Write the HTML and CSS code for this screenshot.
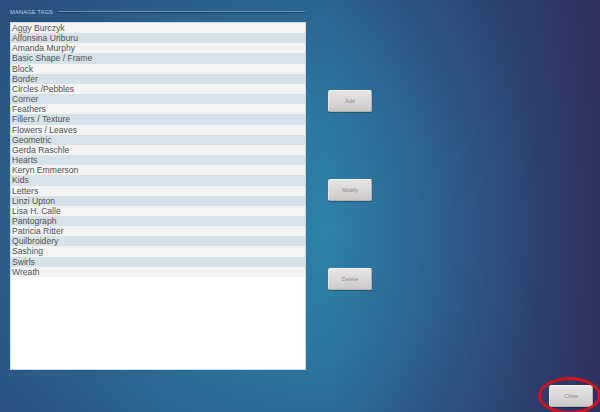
FILE: index.html
```html
<!DOCTYPE html>
<html>
<head>
<meta charset="utf-8">
<link rel="stylesheet" href="styles.css">
</head>
<body>
<div class="page">
  <div class="header">
    <span class="title">MANAGE TAGS</span>
    <span class="rule"></span>
  </div>
  <div class="main">
    <div class="list">
      <div class="row">Aggy Burczyk</div>
      <div class="row">Alfonsina Uriburu</div>
      <div class="row">Amanda Murphy</div>
      <div class="row">Basic Shape / Frame</div>
      <div class="row">Block</div>
      <div class="row">Border</div>
      <div class="row">Circles /Pebbles</div>
      <div class="row">Corner</div>
      <div class="row">Feathers</div>
      <div class="row">Fillers / Texture</div>
      <div class="row">Flowers / Leaves</div>
      <div class="row">Geometric</div>
      <div class="row">Gerda Raschle</div>
      <div class="row">Hearts</div>
      <div class="row">Keryn Emmerson</div>
      <div class="row">Kids</div>
      <div class="row">Letters</div>
      <div class="row">Linzi Upton</div>
      <div class="row">Lisa H. Calle</div>
      <div class="row">Pantograph</div>
      <div class="row">Patricia Ritter</div>
      <div class="row">Quilbroidery</div>
      <div class="row">Sashing</div>
      <div class="row">Swirls</div>
      <div class="row">Wreath</div>
    </div>
    <div class="actions">
      <button class="btn">Add</button>
      <button class="btn">Modify</button>
      <button class="btn">Delete</button>
    </div>
  </div>
  <div class="footer">
    <div class="close-wrap">
      <button class="btn">Close</button>
      <span class="ring"></span>
    </div>
  </div>
</div>
</body>
</html>
```
FILE: styles.css
```css
html, body {
  margin: 0;
  padding: 0;
}
body {
  width: 600px;
  height: 412px;
  overflow: hidden;
  font-family: "Liberation Sans", Arial, sans-serif;
  background:
    linear-gradient(to right, rgba(48,44,92,0) 0%, rgba(48,44,92,0) 55%, rgba(48,44,92,0.55) 85%, rgba(48,44,92,0.9) 100%),
    radial-gradient(ellipse 420px 330px at 330px 230px, #2d82aa 0%, #2c78a1 35%, #2b6690 65%, #2a4f7c 100%);
}
.page {
  display: flex;
  flex-direction: column;
  height: 412px;
}
.header {
  height: 22px;
  display: flex;
  align-items: center;
  padding: 1px 0 0 10px;
  box-sizing: border-box;
  gap: 5px;
}
.title {
  font-size: 5.8px;
  color: #b9cde0;
  letter-spacing: 0.1px;
  white-space: nowrap;
}
.rule {
  flex: 0 0 247px;
  height: 1px;
  background: #6d95b8;
  box-shadow: 0 1px 0 rgba(20,50,80,0.6);
}
.main {
  display: flex;
  padding-left: 10px;
}
.list {
  width: 296px;
  height: 348px;
  box-sizing: border-box;
  background: #fff;
  border: 1px solid #c9dbe6;
}
.row {
  height: 10.16px;
  line-height: 10px;
  font-size: 8.6px;
  color: #525252;
  padding-left: 1px;
  white-space: nowrap;
  overflow: hidden;
}
.row:nth-child(odd) {
  background: #f4f4f4;
}
.row:nth-child(even) {
  background: #d6e1e8;
}
.actions {
  display: flex;
  flex-direction: column;
  margin-left: 22px;
  padding-top: 68px;
  gap: 67px;
}
.btn {
  width: 44px;
  height: 22px;
  padding: 0;
  margin: 0;
  border: 1px solid #b3b0b0;
  border-top-color: #f2f2f2;
  border-left-color: #e6e4e4;
  border-radius: 2px;
  background: linear-gradient(to bottom, #e6e4e4 0%, #d8d5d5 60%, #cbc8c8 100%);
  font-family: "Liberation Sans", Arial, sans-serif;
  font-size: 5.5px;
  color: #8a8888;
  box-shadow: 0 1px 1px rgba(0,0,0,0.25);
}
.footer {
  display: flex;
  justify-content: flex-end;
  padding: 14px 7px 0 0;
}
.close-wrap {
  position: relative;
}
.ring {
  position: absolute;
  left: -11px;
  top: -7px;
  width: 57px;
  height: 31px;
  border: 3px solid #d3131d;
  border-radius: 50%;
}
```
